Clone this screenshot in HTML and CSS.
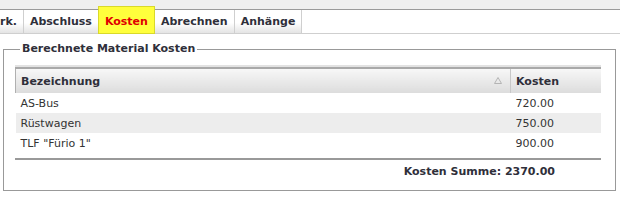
FILE: index.html
```html
<!DOCTYPE html>
<html lang="de">
<head>
  <meta charset="UTF-8" />
  <title>Kosten</title>
  <link rel="stylesheet" href="styles.css">
</head>
<body>
  <div class="tabbar">
    <ul class="tabs">
      <li class="tab tab-first">rk.</li>
      <li class="tab">Abschluss</li>
      <li class="tab tab-active">Kosten</li>
      <li class="tab">Abrechnen</li>
      <li class="tab">Anhänge</li>
    </ul>
  </div>

  <fieldset class="panel">
    <legend>Berechnete Material Kosten</legend>
    <div class="grid-rule"></div>
    <table class="grid">
      <thead>
        <tr>
          <th class="col-name">
            Bezeichnung
            <svg class="sort" width="8" height="7" viewBox="0 0 8 7"><path d="M4 0.5 L7.5 6.5 L0.5 6.5 Z" fill="none" stroke="#b4b4b4" stroke-width="1"/></svg>
          </th>
          <th class="col-cost">Kosten</th>
        </tr>
      </thead>
      <tbody>
        <tr><td>AS-Bus</td><td class="num">720.00</td></tr>
        <tr class="alt"><td>Rüstwagen</td><td class="num">750.00</td></tr>
        <tr><td>TLF "Fürio 1"</td><td class="num">900.00</td></tr>
      </tbody>
    </table>
    <div class="grid-foot">Kosten Summe: 2370.00</div>
  </fieldset>
</body>
</html>
```

FILE: styles.css
```css
body {
  margin: 0;
  font-family: "DejaVu Sans", Verdana, sans-serif;
  font-size: 11px;
  color: #333;
  background: #fff;
}
.tabbar {
  background-color: #efefef;
  padding-top: 9px;
}
.tabs {
  display: flex;
  margin: 0;
  padding: 0;
  list-style: none;
  height: 23px;
  background: #fff;
  border-top: 1px solid #9a9a9a;
  border-bottom: 1px solid #cfcfcf;
}
.tab {
  padding: 0 6px;
  line-height: 23px;
  font-weight: bold;
  color: #2f2f3a;
  border-right: 1px solid #cfcfcf;
  background: linear-gradient(#ffffff 55%, #e4e4e4);
}
.tab-first {
  padding-left: 0;
}
.tab-active {
  margin: -4px 0 -1px -1px;
  padding-top: 3px;
  color: #e00000;
  background: #ffff3c;
  border: 1px solid #d9d92a;
}
.panel {
  margin: 8px 4px 0 3px;
  padding: 9px 14px 10px 11px;
  border: 1px solid #999;
}
.panel legend {
  margin-left: 5px;
  padding: 0 2px;
  font-weight: bold;
  line-height: 14px;
  color: #2f2f3a;
}
.grid-rule {
  height: 2px;
  background: #e2e2e2;
  border-bottom: 2px solid #a9a9a9;
}
.grid {
  width: 100%;
  border-collapse: collapse;
}
.grid th {
  height: 24px;
  padding: 0 5px;
  text-align: left;
  font-weight: bold;
  color: #2f2f3a;
  background: linear-gradient(#f7f7f7, #dcdcdc);
}
.col-name {
  border-left: 1px solid #b0b0b0;
}
.col-cost {
  width: 79px;
  border-left: 1px solid #c8c8c8;
}
.sort {
  float: right;
  margin: 2px 3px 0 0;
}
.grid td {
  height: 20px;
  padding: 0 5px;
}
.grid td.num {
  text-align: right;
  padding-right: 47px;
}
.grid tr.alt td {
  background: #ededed;
}
.grid-foot {
  margin-top: 5px;
  padding: 4px 46px 0 0;
  border-top: 2px solid #999;
  text-align: right;
  font-weight: bold;
  line-height: 16px;
  color: #2f2f3a;
}
```
